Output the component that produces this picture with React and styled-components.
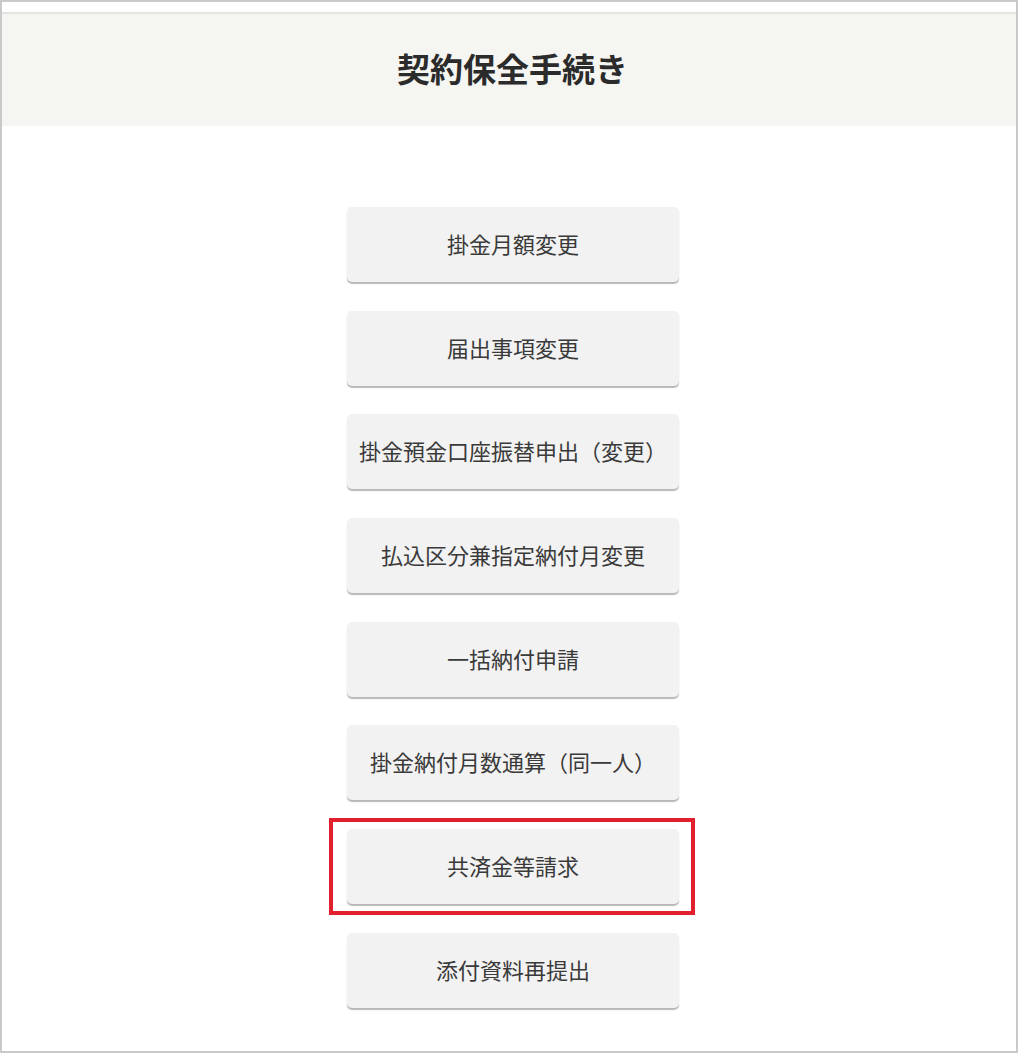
import React from "react";
import styled, { createGlobalStyle } from "styled-components";

const GlobalStyle = createGlobalStyle`
  html, body {
    margin: 0;
    padding: 0;
    background: #ffffff;
  }
  body {
    font-family: "Noto Sans CJK JP", "Noto Sans", sans-serif;
  }
`;

const Frame = styled.div`
  box-sizing: border-box;
  width: 1018px;
  height: 1053px;
  border: 2px solid #c9c9c9;
  padding-top: 10px;
  background: #ffffff;
`;

const Header = styled.header`
  box-sizing: border-box;
  height: 114px;
  background: #f5f5f1;
  border-top: 2px solid #e4e4e2;
  display: flex;
  align-items: center;
  justify-content: center;
  padding: 0 0 4px 7px;

  > h1 {
    margin: 0;
    font-size: 33px;
    font-weight: 700;
    color: #2b2b2b;
  }
`;

const Menu = styled.nav`
  display: flex;
  flex-direction: column;
  align-items: center;
  gap: 28.7px;
  padding: 81px 0 0 8px;
`;

const MenuButton = styled.button`
  position: relative;
  box-sizing: border-box;
  width: 332px;
  height: 75px;
  padding: 0 8px 3px;
  border: none;
  border-radius: 5px;
  background: #f2f2f2;
  box-shadow: 0 2px 1px rgba(0, 0, 0, 0.28);
  font-family: inherit;
  font-size: 22px;
  font-weight: 400;
  color: #3a3a3a;
  white-space: nowrap;
  cursor: pointer;

  ${({ $highlighted }) =>
    $highlighted &&
    `
    &::after {
      content: "";
      position: absolute;
      top: -11px;
      bottom: -11px;
      left: -18px;
      right: -16px;
      border: 4px solid #e21f2c;
      pointer-events: none;
    }
  `}
`;

const items = [
  "掛金月額変更",
  "届出事項変更",
  "掛金預金口座振替申出（変更）",
  "払込区分兼指定納付月変更",
  "一括納付申請",
  "掛金納付月数通算（同一人）",
  "共済金等請求",
  "添付資料再提出",
];

const App = () => {
  return (
    <>
      <GlobalStyle />
      <Frame>
        <Header>
          <h1>契約保全手続き</h1>
        </Header>
        <Menu>
          {items.map((label) => (
            <MenuButton key={label} $highlighted={label === "共済金等請求"}>
              {label}
            </MenuButton>
          ))}
        </Menu>
      </Frame>
    </>
  );
};

export default App;
